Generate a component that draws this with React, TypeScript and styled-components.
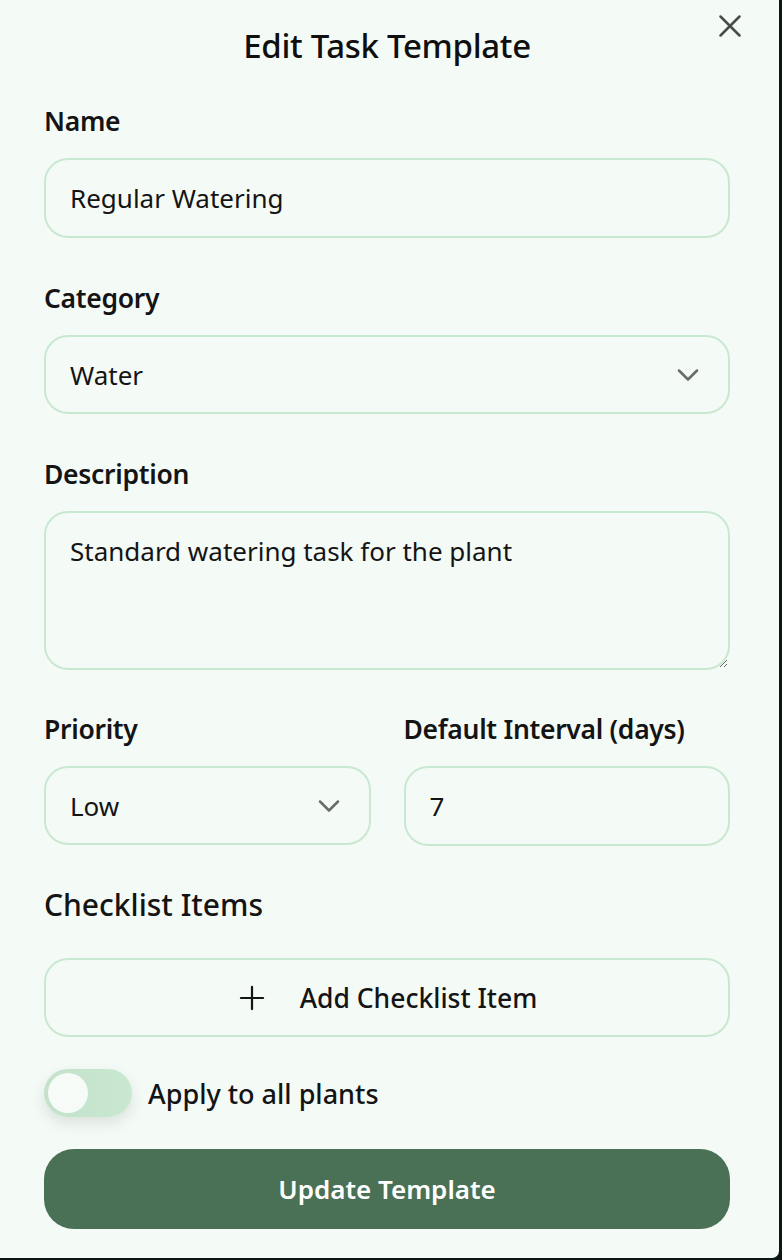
import React from "react";
import styled, { createGlobalStyle } from "styled-components";

const Global = createGlobalStyle`
  html, body { margin: 0; padding: 0; background: #0c1612; }
  * { box-sizing: border-box; }
  body { font-family: "Noto Sans", "Open Sans", sans-serif; color: #141414; }
`;

const Dialog = styled.div`
  position: relative;
  width: 779px;
  height: 1258px;
  background: #f4faf6;
  border-bottom-right-radius: 7px;
  padding: 26px 49px 0 44px;
  display: flex;
  flex-direction: column;
  overflow: hidden;
`;

const Title = styled.h1`
  margin: 0 0 40px;
  height: 40px;
  line-height: 40px;
  font-size: 33px;
  font-weight: 500;
  text-align: center;
  letter-spacing: -0.3px;
  color: #0f0f0f;
`;

const Close = styled.button`
  position: absolute;
  top: 7px;
  right: 30px;
  width: 38px;
  height: 38px;
  padding: 0;
  border: none;
  background: transparent;
  color: #4b4b4b;
  display: flex;
  align-items: center;
  justify-content: center;
`;

const Field = styled.div<{ $gap?: number }>`
  display: flex;
  flex-direction: column;
  margin-bottom: ${(p) => p.$gap ?? 45}px;
  min-width: 0;
`;

const Label = styled.label`
  height: 30px;
  line-height: 30px;
  margin-bottom: 22px;
  font-size: 26.5px;
  font-weight: 600;
  letter-spacing: -0.3px;
`;

const boxStyles = `
  width: 100%;
  border: 2px solid #c9e8d1;
  border-radius: 24px;
  background: #f4faf6;
  font-family: inherit;
  font-size: 26px;
  color: #141414;
  outline: none;
`;

const Input = styled.input`
  ${boxStyles}
  height: 80px;
  padding: 0 24px;
`;

const SelectBox = styled.div`
  ${boxStyles}
  height: 79px;
  padding: 0 22px 0 24px;
  display: flex;
  align-items: center;
  justify-content: space-between;
`;

const TextArea = styled.textarea`
  ${boxStyles}
  height: 159px;
  padding: 20px 24px;
  resize: vertical;
  line-height: 36px;
`;

const Row = styled.div`
  display: grid;
  grid-template-columns: 1fr 1fr;
  column-gap: 33px;
`;

const Heading = styled.h2`
  margin: 0 0 35px;
  height: 36px;
  line-height: 36px;
  font-size: 30px;
  font-weight: 500;
`;

const AddButton = styled.button`
  ${boxStyles}
  height: 79px;
  display: flex;
  align-items: center;
  justify-content: center;
  gap: 29px;
  padding: 0 4px 0 0;
  font-size: 26.5px;
  font-weight: 500;
  margin-bottom: 32px;
`;

const ToggleRow = styled.div`
  display: flex;
  align-items: center;
  gap: 16px;
  height: 48px;
  margin-bottom: 32px;
  font-size: 27px;
  font-weight: 500;
`;

const Track = styled.div`
  width: 88px;
  height: 48px;
  border-radius: 24px;
  background: linear-gradient(90deg, #c3e1cb, #c9e8d1);
  box-shadow: 0 6px 14px rgba(40, 60, 45, 0.12);
  padding: 4px;
  display: flex;
  align-items: center;
`;

const Knob = styled.div`
  width: 40px;
  height: 40px;
  border-radius: 50%;
  background: #f6fbf7;
`;

const Submit = styled.button`
  width: 100%;
  height: 80px;
  border: none;
  border-radius: 30px;
  background: #4a7055;
  color: #ffffff;
  font-family: inherit;
  font-size: 26px;
  font-weight: 600;
`;

const Chevron = () => (
  <svg width="36" height="36" viewBox="0 0 24 24" fill="none" stroke="#6b6b6b" strokeWidth="1.7" strokeLinecap="round" strokeLinejoin="round">
    <path d="m6 9 6 6 6-6" />
  </svg>
);

export default function App() {
  return (
    <>
      <Global />
      <Dialog>
        <Close aria-label="Close">
          <svg width="38" height="38" viewBox="0 0 24 24" fill="none" stroke="currentColor" strokeWidth="1.6" strokeLinecap="round">
            <path d="M18 6 6 18" />
            <path d="m6 6 12 12" />
          </svg>
        </Close>
        <Title>Edit Task Template</Title>

        <Field>
          <Label>Name</Label>
          <Input defaultValue="Regular Watering" />
        </Field>

        <Field>
          <Label>Category</Label>
          <SelectBox>
            <span>Water</span>
            <Chevron />
          </SelectBox>
        </Field>

        <Field $gap={44}>
          <Label>Description</Label>
          <TextArea defaultValue="Standard watering task for the plant" />
        </Field>

        <Row>
          <Field $gap={41}>
            <Label>Priority</Label>
            <SelectBox>
              <span>Low</span>
              <Chevron />
            </SelectBox>
          </Field>
          <Field $gap={41}>
            <Label>Default Interval (days)</Label>
            <Input defaultValue="7" />
          </Field>
        </Row>

        <Heading>Checklist Items</Heading>
        <AddButton>
          <svg width="38" height="38" viewBox="0 0 24 24" fill="none" stroke="#141414" strokeWidth="1.4" strokeLinecap="round">
            <path d="M5 12h14" />
            <path d="M12 5v14" />
          </svg>
          <span>Add Checklist Item</span>
        </AddButton>

        <ToggleRow>
          <Track>
            <Knob />
          </Track>
          <span>Apply to all plants</span>
        </ToggleRow>

        <Submit>Update Template</Submit>
      </Dialog>
    </>
  );
}
